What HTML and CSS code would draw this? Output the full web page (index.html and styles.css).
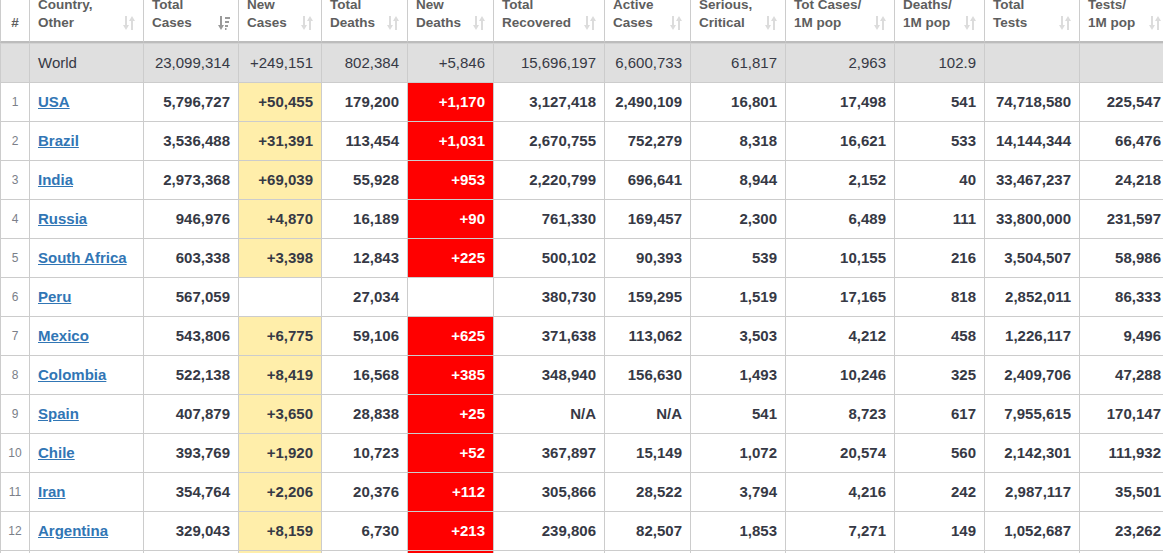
FILE: index.html
```html
<!DOCTYPE html>
<html lang="en">
<head>
<meta charset="utf-8">
<title>Coronavirus Cases</title>
<link rel="stylesheet" href="styles.css">
</head>
<body>
<div class="viewport">
<table class="cases">
  <colgroup>
    <col class="c-num"><col class="c-country"><col class="c-95"><col class="c-83"><col class="c-86"><col class="c-86"><col class="c-111"><col class="c-86"><col class="c-95"><col class="c-109"><col class="c-90"><col class="c-95"><col class="c-90">
  </colgroup>
  <thead>
    <tr>
      <th class="th-num">#</th>
      <th><div class="th-in"><span>Country,<br>Other</span><svg class="sort" viewBox="0 0 12 14"><path d="M2 0h2v9h2L3 14 0 9h2z"/><path d="M8 14h2V5h2L9 0 6 5h2z"/></svg></div></th>
      <th><div class="th-in"><span>Total<br>Cases</span><svg class="sort active" viewBox="0 0 12 14"><path d="M2 0h2v9h2L3 14 0 9h2z"/><path d="M7 1h5v2H7zM7 5h4v2H7zM7 9h3v2H7zM7 12h1.5v2H7z"/></svg></div></th>
      <th><div class="th-in"><span>New<br>Cases</span><svg class="sort" viewBox="0 0 12 14"><path d="M2 0h2v9h2L3 14 0 9h2z"/><path d="M8 14h2V5h2L9 0 6 5h2z"/></svg></div></th>
      <th><div class="th-in"><span>Total<br>Deaths</span><svg class="sort" viewBox="0 0 12 14"><path d="M2 0h2v9h2L3 14 0 9h2z"/><path d="M8 14h2V5h2L9 0 6 5h2z"/></svg></div></th>
      <th><div class="th-in"><span>New<br>Deaths</span><svg class="sort" viewBox="0 0 12 14"><path d="M2 0h2v9h2L3 14 0 9h2z"/><path d="M8 14h2V5h2L9 0 6 5h2z"/></svg></div></th>
      <th><div class="th-in"><span>Total<br>Recovered</span><svg class="sort" viewBox="0 0 12 14"><path d="M2 0h2v9h2L3 14 0 9h2z"/><path d="M8 14h2V5h2L9 0 6 5h2z"/></svg></div></th>
      <th><div class="th-in"><span>Active<br>Cases</span><svg class="sort" viewBox="0 0 12 14"><path d="M2 0h2v9h2L3 14 0 9h2z"/><path d="M8 14h2V5h2L9 0 6 5h2z"/></svg></div></th>
      <th><div class="th-in"><span>Serious,<br>Critical</span><svg class="sort" viewBox="0 0 12 14"><path d="M2 0h2v9h2L3 14 0 9h2z"/><path d="M8 14h2V5h2L9 0 6 5h2z"/></svg></div></th>
      <th><div class="th-in"><span>Tot&nbsp;Cases/<br>1M pop</span><svg class="sort" viewBox="0 0 12 14"><path d="M2 0h2v9h2L3 14 0 9h2z"/><path d="M8 14h2V5h2L9 0 6 5h2z"/></svg></div></th>
      <th><div class="th-in"><span>Deaths/<br>1M pop</span><svg class="sort" viewBox="0 0 12 14"><path d="M2 0h2v9h2L3 14 0 9h2z"/><path d="M8 14h2V5h2L9 0 6 5h2z"/></svg></div></th>
      <th><div class="th-in"><span>Total<br>Tests</span><svg class="sort" viewBox="0 0 12 14"><path d="M2 0h2v9h2L3 14 0 9h2z"/><path d="M8 14h2V5h2L9 0 6 5h2z"/></svg></div></th>
      <th><div class="th-in"><span>Tests/<br>1M pop</span><svg class="sort" viewBox="0 0 12 14"><path d="M2 0h2v9h2L3 14 0 9h2z"/><path d="M8 14h2V5h2L9 0 6 5h2z"/></svg></div></th>
    </tr>
  </thead>
  <tbody>
    <tr class="world">
      <td></td><td class="name">World</td><td>23,099,314</td><td>+249,151</td><td>802,384</td><td>+5,846</td><td>15,696,197</td><td>6,600,733</td><td>61,817</td><td>2,963</td><td>102.9</td><td></td><td></td>
    </tr>
    <tr>
      <td class="rank">1</td><td class="name"><a href="#">USA</a></td><td>5,796,727</td><td class="new-c">+50,455</td><td>179,200</td><td class="new-d">+1,170</td><td>3,127,418</td><td>2,490,109</td><td>16,801</td><td>17,498</td><td>541</td><td>74,718,580</td><td>225,547</td>
    </tr>
    <tr>
      <td class="rank">2</td><td class="name"><a href="#">Brazil</a></td><td>3,536,488</td><td class="new-c">+31,391</td><td>113,454</td><td class="new-d">+1,031</td><td>2,670,755</td><td>752,279</td><td>8,318</td><td>16,621</td><td>533</td><td>14,144,344</td><td>66,476</td>
    </tr>
    <tr>
      <td class="rank">3</td><td class="name"><a href="#">India</a></td><td>2,973,368</td><td class="new-c">+69,039</td><td>55,928</td><td class="new-d">+953</td><td>2,220,799</td><td>696,641</td><td>8,944</td><td>2,152</td><td>40</td><td>33,467,237</td><td>24,218</td>
    </tr>
    <tr>
      <td class="rank">4</td><td class="name"><a href="#">Russia</a></td><td>946,976</td><td class="new-c">+4,870</td><td>16,189</td><td class="new-d">+90</td><td>761,330</td><td>169,457</td><td>2,300</td><td>6,489</td><td>111</td><td>33,800,000</td><td>231,597</td>
    </tr>
    <tr>
      <td class="rank">5</td><td class="name"><a href="#">South Africa</a></td><td>603,338</td><td class="new-c">+3,398</td><td>12,843</td><td class="new-d">+225</td><td>500,102</td><td>90,393</td><td>539</td><td>10,155</td><td>216</td><td>3,504,507</td><td>58,986</td>
    </tr>
    <tr>
      <td class="rank">6</td><td class="name"><a href="#">Peru</a></td><td>567,059</td><td></td><td>27,034</td><td></td><td>380,730</td><td>159,295</td><td>1,519</td><td>17,165</td><td>818</td><td>2,852,011</td><td>86,333</td>
    </tr>
    <tr>
      <td class="rank">7</td><td class="name"><a href="#">Mexico</a></td><td>543,806</td><td class="new-c">+6,775</td><td>59,106</td><td class="new-d">+625</td><td>371,638</td><td>113,062</td><td>3,503</td><td>4,212</td><td>458</td><td>1,226,117</td><td>9,496</td>
    </tr>
    <tr>
      <td class="rank">8</td><td class="name"><a href="#">Colombia</a></td><td>522,138</td><td class="new-c">+8,419</td><td>16,568</td><td class="new-d">+385</td><td>348,940</td><td>156,630</td><td>1,493</td><td>10,246</td><td>325</td><td>2,409,706</td><td>47,288</td>
    </tr>
    <tr>
      <td class="rank">9</td><td class="name"><a href="#">Spain</a></td><td>407,879</td><td class="new-c">+3,650</td><td>28,838</td><td class="new-d">+25</td><td>N/A</td><td>N/A</td><td>541</td><td>8,723</td><td>617</td><td>7,955,615</td><td>170,147</td>
    </tr>
    <tr>
      <td class="rank">10</td><td class="name"><a href="#">Chile</a></td><td>393,769</td><td class="new-c">+1,920</td><td>10,723</td><td class="new-d">+52</td><td>367,897</td><td>15,149</td><td>1,072</td><td>20,574</td><td>560</td><td>2,142,301</td><td>111,932</td>
    </tr>
    <tr>
      <td class="rank">11</td><td class="name"><a href="#">Iran</a></td><td>354,764</td><td class="new-c">+2,206</td><td>20,376</td><td class="new-d">+112</td><td>305,866</td><td>28,522</td><td>3,794</td><td>4,216</td><td>242</td><td>2,987,117</td><td>35,501</td>
    </tr>
    <tr>
      <td class="rank">12</td><td class="name"><a href="#">Argentina</a></td><td>329,043</td><td class="new-c">+8,159</td><td>6,730</td><td class="new-d">+213</td><td>239,806</td><td>82,507</td><td>1,853</td><td>7,271</td><td>149</td><td>1,052,687</td><td>23,262</td>
    </tr>
    <tr>
      <td class="rank">13</td><td class="name"><a href="#">UK</a></td><td>324,601</td><td class="new-c">+1,288</td><td>41,423</td><td class="new-d">+18</td><td>N/A</td><td>N/A</td><td>73</td><td>4,776</td><td>609</td><td>14,470,312</td><td>212,882</td>
    </tr>
  </tbody>
</table>
</div>
</body>
</html>
```

FILE: styles.css
```css
html, body {
  margin: 0;
  padding: 0;
  background: #fff;
  overflow: hidden;
}

.viewport {
  width: 100%;
  height: 553px;
  overflow: hidden;
}

.cases {
  margin-top: -12px;
  border-collapse: separate;
  border-spacing: 0;
  table-layout: fixed;
  width: 1169px;
  font-family: "Liberation Sans", Arial, sans-serif;
  font-size: 15px;
  color: #363945;
}

.c-num { width: 29px; }
.c-country { width: 114px; }
.c-83 { width: 83px; }
.c-86 { width: 86px; }
.c-90 { width: 90px; }
.c-95 { width: 95px; }
.c-109 { width: 109px; }
.c-111 { width: 111px; }

.cases th,
.cases td {
  box-sizing: border-box;
  border-left: 1px solid #cccccc;
  white-space: nowrap;
  overflow: hidden;
}

.cases th {
  padding: 8px 8px 9px 8px;
  font-size: 13.5px;
  line-height: 18px;
  font-weight: bold;
  color: #5e5e5e;
  text-align: left;
  vertical-align: bottom;
  border-bottom: 2px solid #bcbcbc;
}

.cases th.th-num {
  text-align: center;
  padding-left: 2px;
  padding-right: 2px;
}

.th-in {
  display: flex;
  justify-content: space-between;
  align-items: flex-end;
}

.sort {
  width: 12px;
  height: 14px;
  margin-bottom: 2px;
  flex: none;
  fill: #dcdcdc;
}

.sort.active {
  fill: #9a9a9a;
}

.cases td {
  padding: 8px 8px;
  line-height: 22px;
  height: 39px;
  text-align: right;
  font-weight: bold;
  border-bottom: 1px solid #cccccc;
}

.cases td.name {
  text-align: left;
}

.cases td.rank {
  text-align: center;
  font-size: 12px;
  font-weight: normal;
  color: #7b7f89;
  padding-left: 2px;
  padding-right: 2px;
}

.cases a {
  color: #3176b5;
  text-decoration: underline;
}

.world td {
  background: #dfdfdf;
  font-weight: normal;
  border-top: 1px solid #d2d2d2;
}

.new-c {
  background: #ffeeaa;
}

.cases td.new-d {
  background: #ff0000;
  color: #ffffff;
}
```
